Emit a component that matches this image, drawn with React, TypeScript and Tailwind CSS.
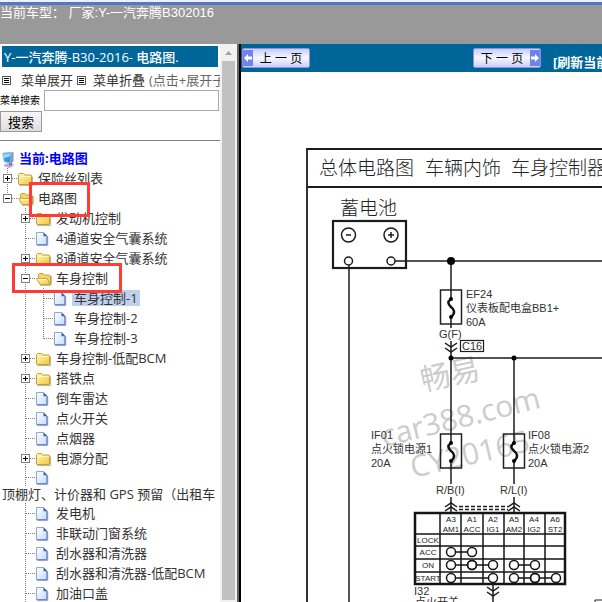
import type { ReactNode } from "react"

type NodeKind = "folder" | "open" | "doc"

interface TreeItem {
    label: string
    kind: NodeKind
    active?: boolean
    last?: boolean
    wrap?: boolean
    children?: TreeItem[]
}

const tree: TreeItem[] = [
    { label: "保险丝列表", kind: "folder" },
    {
        label: "电路图",
        kind: "open",
        last: true,
        children: [
            { label: "发动机控制", kind: "folder" },
            { label: "4通道安全气囊系统", kind: "doc" },
            { label: "8通道安全气囊系统", kind: "folder" },
            {
                label: "车身控制",
                kind: "open",
                children: [
                    { label: "车身控制-1", kind: "doc", active: true },
                    { label: "车身控制-2", kind: "doc" },
                    { label: "车身控制-3", kind: "doc", last: true },
                ],
            },
            { label: "车身控制-低配BCM", kind: "folder" },
            { label: "搭铁点", kind: "folder" },
            { label: "倒车雷达", kind: "doc" },
            { label: "点火开关", kind: "doc" },
            { label: "点烟器", kind: "doc" },
            { label: "电源分配", kind: "folder" },
            { label: "顶棚灯、计价器和 GPS 预留（出租车", kind: "doc", wrap: true },
            { label: "发电机", kind: "doc" },
            { label: "非联动门窗系统", kind: "doc" },
            { label: "刮水器和清洗器", kind: "doc" },
            { label: "刮水器和清洗器-低配BCM", kind: "doc" },
            { label: "加油口盖", kind: "doc" },
        ],
    },
]

function Joint({ kind, last }: { kind: NodeKind; last?: boolean }) {
    return (
        <svg className="h-5 w-[18px] shrink-0" viewBox="0 0 18 20" shapeRendering="crispEdges" fill="none">
            <path d={last ? "M7.5 0V11" : "M7.5 0V20"} stroke="#808080" strokeDasharray="1 1" />
            <path d="M8 10.5H18" stroke="#808080" strokeDasharray="1 1" />
            {kind !== "doc" && (
                <>
                    <rect x="3.5" y="6.5" width="8" height="8" fill="#fff" stroke="#808080" />
                    <path d={kind === "open" ? "M5 10.5H10" : "M5 10.5H10M7.5 8V13"} stroke="#000" />
                </>
            )}
        </svg>
    )
}

function NodeIcon({ kind }: { kind: NodeKind }) {
    if (kind === "doc") {
        return (
            <svg className="h-5 w-[18px] shrink-0" viewBox="0 0 18 20">
                <path d="M1.5 17.6H11.8V9" fill="none" stroke="#8a8fb5" strokeOpacity=".6" />
                <path d="M.5 4.5H7.5L11 8V16.8H.5z" fill="url(#paper)" stroke="#8ea6db" />
                <path d="M11 8V16.8H1" fill="none" stroke="#5d74bd" />
                <path d="M7.500 4.300V8.300H11.300z" fill="#3d5fae" />
            </svg>
        )
    }
    if (kind === "open") {
        return (
            <svg className="h-5 w-[18px] shrink-0" viewBox="0 0 18 20">
                <path d="M4 17.5H14.5L15.5 16V8" fill="none" stroke="#8d8260" strokeOpacity=".5" />
                <path d="M2.500 12V6.500L3.500 5.500H7L8.500 7H13.500L14.500 8V16H4z" fill="#f3d66c" stroke="#c9a030" />
                <path d="M.5 10.500H11.200L14 16.500H4.200z" fill="url(#gold)" stroke="#c9a030" />
                <path d="M1.800 11.400H10.800" stroke="#fffbd0" />
            </svg>
        )
    }
    return (
        <svg className="h-5 w-[18px] shrink-0" viewBox="0 0 18 20">
            <path d="M1.500 17.500H14.500V8.500" fill="none" stroke="#8d8260" strokeOpacity=".6" />
            <path d="M.5 16V6.500L1.500 5.500H5.500L7 7H13L13.500 7.500V16L13 16.500H1z" fill="url(#gold)" stroke="#c9a030" />
            <path d="M1 8.500H13" stroke="#fffbc8" />
        </svg>
    )
}

function Branch({ items, depth = 0 }: { items: TreeItem[]; depth?: number }) {
    return (
        <ul>
            {items.map((item) => (
                <li key={item.label}>
                    <div className={item.wrap ? "flex h-[18px] items-center" : "flex h-5 items-center"}>
                        {Array.from({ length: depth }, (_, i) => (
                            <svg key={i} className="h-5 w-[18px] shrink-0" viewBox="0 0 18 20" shapeRendering="crispEdges">
                                {i > 0 && <path d="M7.5 0V20" stroke="#808080" strokeDasharray="1 1" />}
                            </svg>
                        ))}
                        <Joint kind={item.kind} last={item.last} />
                        <NodeIcon kind={item.kind} />
                        {!item.wrap && (
                            <a
                                href="#"
                                className={item.active ? "bg-[#bfd1ee] px-0.5 leading-4 whitespace-nowrap" : "px-0.5 leading-4 whitespace-nowrap"}
                            >
                                {item.label}
                            </a>
                        )}
                    </div>
                    {item.wrap && (
                        <a href="#" className="block h-[17px] pl-0.5 leading-4 whitespace-nowrap">
                            {item.label}
                        </a>
                    )}
                    {item.children && <Branch items={item.children} depth={depth + 1} />}
                </li>
            ))}
        </ul>
    )
}

function ListIcon() {
    return (
        <svg className="h-[9px] w-[9px] shrink-0" viewBox="0 0 9 9" shapeRendering="crispEdges">
            <rect x=".5" y=".5" width="8" height="8" fill="#fff" stroke="#555" />
            <path d="M2 2.5H7M2 4.5H7M2 6.5H7" stroke="#000" />
        </svg>
    )
}

function Sidebar() {
    return (
        <aside className="relative w-[220px] shrink-0 overflow-hidden text-[13px] text-[#333]">
            <h1 className="mx-0.5 mt-0.5 h-[21px] bg-[#069] pl-0.5 font-medium leading-[22px] whitespace-nowrap text-white">
                Y-一汽奔腾-B30-2016- 电路图.
            </h1>
            <div className="flex h-[23px] items-center pt-1 pl-0.5 whitespace-nowrap">
                <ListIcon />
                <a href="#" className="mr-1 ml-2.5">菜单展开</a>
                <ListIcon />
                <a href="#" className="ml-[7px]">菜单折叠</a>
                <span className="ml-1 text-[#666]">(点击+展开子菜单)</span>
            </div>
            <form onSubmit={(e) => e.preventDefault()}>
                <div className="flex items-center">
                    <label htmlFor="menu-search" className="w-11 shrink-0 text-[10px] whitespace-nowrap text-black">菜单搜索</label>
                    <input id="menu-search" type="text" className="mr-px h-[21px] min-w-0 flex-1 border border-[#a9a9a9] bg-white" />
                </div>
                <button className="block h-[21px] w-[42px] border border-[#999] bg-linear-to-b from-[#f6f6f6] to-[#ddd] leading-4 text-black">
                    搜索
                </button>
            </form>
            <hr className="mt-2 border-[#808080]" />
            <div className="mt-2 flex h-[19px] items-center">
                <svg className="h-5 w-[19px]" viewBox="0 0 19 20">
                    <path d="M4 15.500L8 14L13.500 15V17L9.500 19L4.500 17.500z" fill="#b5b2d2" />
                    <path d="M9 13L12 12.500V16L9 16.500z" fill="#77759f" />
                    <path d="M9 4L13.500 3V12.500L10 15z" fill="#8c93b8" />
                    <path d="M2.800 4.200L11.500 3.200L10.500 14L4.200 12.800z" fill="#2f9be6" stroke="#a8b4cf" strokeWidth=".8" />
                    <path d="M3.500 5L10.800 4.200L10.400 7L3.900 9.500z" fill="#8fdcff" />
                </svg>
                <a href="#" className="font-bold text-[#00f]">当前:电路图</a>
            </div>
            <Branch items={tree} />
            <div className="pointer-events-none absolute top-[138px] left-[29px] h-[35px] w-[61px] border-3 border-[#ff3b38]" />
            <div className="pointer-events-none absolute top-[219px] left-3 h-[30px] w-[110px] border-3 border-[#ff3b38]" />
        </aside>
    )
}

function Scrollbar() {
    return (
        <div className="flex w-[17px] shrink-0 flex-col items-center bg-[#f1f1f1] pb-0.5">
            <svg className="h-[17px] w-[17px] shrink-0" viewBox="0 0 17 17">
                <path d="M5 11L8.500 7L12 11z" fill="#a3a3a3" />
            </svg>
            <div className="w-[13px] flex-1 bg-[#c1c1c1]" />
        </div>
    )
}

function PageButton({ back, children }: { back?: boolean; children: ReactNode }) {
    const arrow = (
        <svg className="h-4 w-2.5 shrink-0 bg-[#6f84e6]" viewBox="0 0 10 16">
            <path d={back ? "M1 8L5 4V6.500H9V9.500H5V12z" : "M9 8L5 4V6.500H1V9.500H5V12z"} fill="#fff" />
        </svg>
    )
    return (
        <button className="flex h-5 w-[68px] shrink-0 items-center rounded-xs border border-[#8c92e0] bg-linear-to-b from-[#c9cffa] via-[#f6f7ff] to-[#c9cffa] font-['Liberation_Sans','Noto_Sans_CJK_SC',sans-serif] text-xs text-black">
            {back && arrow}
            <span className="flex-1 pt-px text-center whitespace-nowrap">{children}</span>
            {!back && arrow}
        </button>
    )
}

function Fuse({ x, y }: { x: number; y: number }) {
    return (
        <g transform={`translate(${x} ${y})`}>
            <rect x="-10.500" y="0" width="21" height="34" fill="none" stroke="#222" strokeWidth="1.500" />
            <path d="M0 0V9M0 27V34" stroke="#1c1c1c" strokeWidth="1.500" />
            <path d="M0 9C-4 12 -3 14 0 17C3 19 5 23 0 27" fill="none" stroke="#111" strokeWidth="2.500" />
            <circle cx="0" cy="9" r="2" />
            <circle cx="0" cy="27" r="2" />
        </g>
    )
}

const columns = [
    { x: 451, pin: "A3", name: "AM1" },
    { x: 472, pin: "A1", name: "ACC" },
    { x: 493, pin: "A2", name: "IG1" },
    { x: 514, pin: "A5", name: "AM2" },
    { x: 534, pin: "A4", name: "IG2" },
    { x: 555, pin: "A6", name: "ST2" },
]

const positions = [
    { y: 540, name: "LOCK", links: [] },
    { y: 552, name: "ACC", links: [[451, 472]] },
    { y: 565, name: "ON", links: [[451, 472], [472, 493], [514, 535]] },
    { y: 578, name: "START", links: [[451, 493], [514, 535], [535, 556]] },
]

function Diagram() {
    return (
        <svg className="block h-[530px] w-[361px]" viewBox="241 72 361 530" role="img" aria-label="总体电路图">
            <g className="font-['Open_Sans','Noto_Sans_CJK_SC',sans-serif] text-[30px]" fill="#ccc">
                <text transform="translate(423 391) rotate(-12)">畅易</text>
                <text transform="translate(384 447) rotate(-14)">car388.com</text>
                <text transform="translate(413 478) rotate(-13)">CY20165</text>
            </g>
            <g fill="none" stroke="#1c1c1c" strokeWidth="1.500">
                <path d="M602 149H307V602M307 187H602" strokeWidth="1.800" />
                <rect x="333" y="221" width="73" height="47" strokeWidth="2.200" />
                <path d="M349 265V602M395 261H602M451 261V290M451 324V328M451 341V434M451 358H602M514 358V434" />
                <path d="M451 468V484M514 468V484M451 497V513M514 497V513M493 585V602" />
                <rect x="460.500" y="340.500" width="23" height="11" strokeWidth="1.200" />
                <path d="M445 343L451 347L457 343M445 348L451 352L457 348" />
                <path d="M445 507L451 503L457 507M445 511L451 507L457 511M508 507L514 503L520 507M508 511L514 507L520 511" />
                <path d="M459 506.500H508M459 509.500H508" strokeDasharray="4 2" />
                <path d="M487 587L493 591L499 587M487 592L493 596L499 592" />
                <circle cx="348.500" cy="235" r="7" />
                <circle cx="391" cy="235" r="7" />
                <path d="M346 235H351M388 235H394M391 232V238" />
                <circle cx="348.500" cy="261" r="4" fill="#fff" />
                <circle cx="391" cy="261" r="4" fill="#fff" />
            </g>
            <circle cx="451" cy="261" r="4" />
            <circle cx="451" cy="358" r="2.500" />
            <circle cx="514" cy="358" r="2.500" />
            <Fuse x={451} y={290} />
            <Fuse x={451} y={434} />
            <Fuse x={514} y={434} />

            <g className="font-['Liberation_Serif','Noto_Sans_CJK_SC',serif] text-[19px] font-light" fill="#222">
                <text x="319" y="175">总体电路图</text>
                <text x="425" y="175">车辆内饰</text>
                <text x="511" y="175">车身控制器</text>
                <text x="340" y="215">蓄电池</text>
            </g>
            <g className="font-['Liberation_Sans','Noto_Sans_CJK_SC',sans-serif] text-[11px]" fill="#333">
                <text x="466" y="298">EF24</text>
                <text x="466" y="312">仪表板配电盒BB1+</text>
                <text x="466" y="326">60A</text>
                <text x="439" y="338">G(F)</text>
                <text x="462" y="350">C16</text>
                <text x="371" y="439">IF01</text>
                <text x="371" y="453">点火锁电源1</text>
                <text x="371" y="467">20A</text>
                <text x="528" y="439">IF08</text>
                <text x="528" y="453">点火锁电源2</text>
                <text x="528" y="467">20A</text>
                <text x="436" y="494">R/B(I)</text>
                <text x="500" y="494">R/L(I)</text>
                <text x="414" y="595">I32</text>
                <text x="415" y="606">点火开关</text>
            </g>

            <g fill="none" stroke="#151515" strokeWidth="1.500">
                <rect x="415" y="513" width="150" height="71" strokeWidth="2.500" />
                <path d="M415 534H565M415 546H565M415 559H565M415 572H565M440 513V584M461 513V584M483 513V584M504 513V584M524 513V584M545 513V584" />
            </g>
            <g className="font-['Liberation_Sans',sans-serif] text-[8px]" fill="#222" textAnchor="middle">
                {columns.map((c) => (
                    <g key={c.pin}>
                        <text x={c.x} y="522">{c.pin}</text>
                        <text x={c.x} y="532">{c.name}</text>
                    </g>
                ))}
                {positions.map((p) => (
                    <g key={p.name}>
                        <text x="428" y={p.y + 3}>{p.name}</text>
                        {p.links.map(([from, to]) => (
                            <g key={from} fill="none" stroke="#151515" strokeWidth="1.500">
                                <path d={`M${from + 5} ${p.y}H${to - 5}`} />
                                <circle cx={from} cy={p.y} r="4.500" />
                                <circle cx={to} cy={p.y} r="4.500" />
                            </g>
                        ))}
                    </g>
                ))}
            </g>
            <path d="M602 600H595V602" fill="none" stroke="#222" />
        </svg>
    )
}

export default function App() {
    return (
        <div className="flex h-screen flex-col overflow-hidden bg-white font-['Open_Sans','Noto_Sans_CJK_SC',sans-serif]">
            <svg className="absolute h-0 w-0" aria-hidden="true">
                <linearGradient id="gold" x1="0" y1="0" x2="1" y2="1">
                    <stop offset="0" stopColor="#fff9b8" />
                    <stop offset="1" stopColor="#f5c53c" />
                </linearGradient>
                <linearGradient id="paper" x1="0" y1="0" x2="1" y2="1">
                    <stop offset="0" stopColor="#fff" />
                    <stop offset="1" stopColor="#c3dcfb" />
                </linearGradient>
            </svg>
            <header className="h-11 shrink-0 border-t-2 border-[#edf1fa] bg-[#999] font-['Liberation_Sans','Noto_Sans_CJK_SC',sans-serif] text-[13px] text-white">
                <div className="h-[3px] bg-[#5577c8]" />
                <p className="leading-4 whitespace-pre">当前车型： 厂家:Y-一汽奔腾B302016</p>
            </header>
            <div className="flex min-h-0 flex-1">
                <Sidebar />
                <Scrollbar />
                <div className="w-1 shrink-0 border-r-2 border-black bg-[#666]" />
                <main className="min-w-0 flex-1 overflow-hidden">
                    <nav className="flex h-7 items-center bg-[#069] pl-px">
                        <PageButton back>上 一 页</PageButton>
                        <div className="ml-[163px] shrink-0">
                            <PageButton>下 一 页</PageButton>
                        </div>
                        <a href="#" className="mt-2.5 ml-3 shrink-0 text-[13px] font-bold whitespace-nowrap text-white">[刷新当前页]</a>
                    </nav>
                    <Diagram />
                </main>
            </div>
        </div>
    )
}
